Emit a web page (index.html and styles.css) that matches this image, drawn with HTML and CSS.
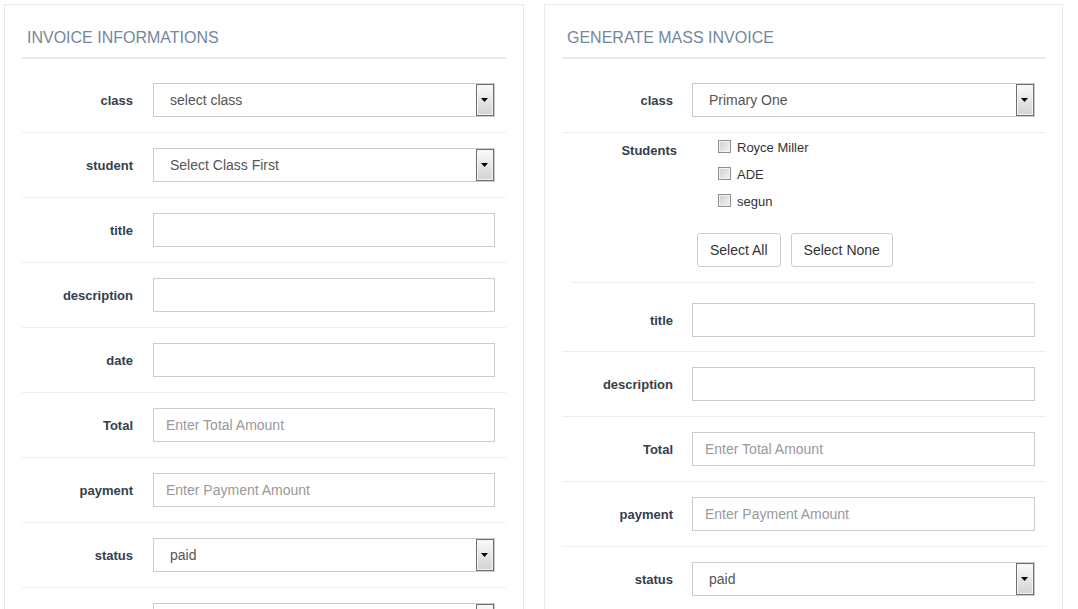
FILE: index.html
```html
<!DOCTYPE html>
<html>
<head>
<meta charset="utf-8">
<title>Invoices</title>
<link rel="stylesheet" href="styles.css">
</head>
<body>
<div class="page">
  <section class="panel">
    <h2 class="panel-title">Invoice Informations</h2>
    <div class="form">
      <div class="row">
        <label class="label">class</label>
        <div class="select"><select class="control"><option>select class</option></select></div>
      </div>
      <div class="row">
        <label class="label">student</label>
        <div class="select"><select class="control"><option>Select Class First</option></select></div>
      </div>
      <div class="row">
        <label class="label">title</label>
        <input class="control" type="text">
      </div>
      <div class="row">
        <label class="label">description</label>
        <input class="control" type="text">
      </div>
      <div class="row">
        <label class="label">date</label>
        <input class="control" type="text">
      </div>
      <div class="row">
        <label class="label">Total</label>
        <input class="control" type="text" placeholder="Enter Total Amount">
      </div>
      <div class="row">
        <label class="label">payment</label>
        <input class="control" type="text" placeholder="Enter Payment Amount">
      </div>
      <div class="row">
        <label class="label">status</label>
        <div class="select"><select class="control"><option>paid</option></select></div>
      </div>
      <div class="row">
        <label class="label"></label>
        <div class="select"><select class="control"><option></option></select></div>
      </div>
    </div>
  </section>

  <section class="panel panel-mass">
    <h2 class="panel-title">Generate Mass Invoice</h2>
    <div class="form">
      <div class="row">
        <label class="label">class</label>
        <div class="select"><select class="control"><option>Primary One</option></select></div>
      </div>
      <div class="row row-students">
        <label class="label label-top">Students</label>
        <div class="students">
          <ul class="checks">
            <li class="check"><span class="box"></span>Royce Miller</li>
            <li class="check"><span class="box"></span>ADE</li>
            <li class="check"><span class="box"></span>segun</li>
          </ul>
          <div class="buttons">
            <button class="btn" type="button">Select All</button>
            <button class="btn" type="button">Select None</button>
          </div>
        </div>
      </div>
      <div class="sep"></div>
      <div class="row row-after-sep">
        <label class="label">title</label>
        <input class="control" type="text">
      </div>
      <div class="row">
        <label class="label">description</label>
        <input class="control" type="text">
      </div>
      <div class="row">
        <label class="label">Total</label>
        <input class="control" type="text" placeholder="Enter Total Amount">
      </div>
      <div class="row">
        <label class="label">payment</label>
        <input class="control" type="text" placeholder="Enter Payment Amount">
      </div>
      <div class="row">
        <label class="label">status</label>
        <div class="select"><select class="control"><option>paid</option></select></div>
      </div>
    </div>
  </section>
</div>
</body>
</html>
```

FILE: styles.css
```css
html, body {
  margin: 0;
  background: #fff;
}
body {
  padding: 4px;
  font-family: "Liberation Sans", Arial, sans-serif;
  color: #333;
}
.page {
  display: grid;
  grid-template-columns: 520px 519px;
  column-gap: 20px;
  align-items: start;
}
.panel {
  border: 1px solid #e6e9ed;
  padding: 22px 17px 0 17px;
  background: #fff;
}
.panel-mass {
  padding-right: 16px;
}
.panel-title {
  margin: 0;
  padding: 0 0 8px 5px;
  font-size: 16px;
  line-height: 22px;
  font-weight: normal;
  text-transform: uppercase;
  color: #73879c;
  border-bottom: 2px solid #e6e9ed;
}
.form {
  padding-top: 9px;
}
.row {
  display: grid;
  grid-template-columns: 111px 1fr;
  column-gap: 20px;
  align-items: center;
  padding: 15px 11px 15px 0;
  border-bottom: 1px solid #eee;
}
.panel-mass .row {
  column-gap: 19px;
}
.label {
  text-align: right;
  font-size: 13px;
  font-weight: bold;
  color: #34404c;
}
.control {
  display: block;
  box-sizing: border-box;
  width: 100%;
  height: 34px;
  margin: 0;
  padding: 0 12px;
  border: 1px solid #ccc;
  border-radius: 0;
  background: #fff;
  font-family: "Liberation Sans", Arial, sans-serif;
  font-size: 14px;
  color: #555;
  outline: none;
}
.control::placeholder {
  color: #999;
}
select.control {
  -webkit-appearance: none;
  appearance: none;
  padding-left: 16px;
}
.select {
  position: relative;
}
.select::after {
  content: "";
  position: absolute;
  right: 1px;
  top: 1px;
  bottom: 1px;
  width: 18px;
  box-sizing: border-box;
  border: 1px solid #6f6f6f;
  box-shadow: inset 0 0 0 1px #f4f4f4;
  background: linear-gradient(#fbfbfb, #e6e6e6 50%, #d2d2d2);
  pointer-events: none;
}
.select::before {
  content: "";
  position: absolute;
  right: 7px;
  top: 50%;
  width: 7px;
  height: 4px;
  margin-top: -2px;
  background: #000;
  clip-path: polygon(0 0, 100% 0, 50% 100%);
  z-index: 1;
  pointer-events: none;
}
.row-students {
  align-items: start;
  padding-top: 4px;
  padding-bottom: 15px;
  border-bottom: none;
}
.label-top {
  padding-top: 4px;
  line-height: 20px;
  margin-right: -4px;
}
.checks {
  list-style: none;
  margin: 0;
  padding: 0 0 0 26px;
  display: flex;
  flex-direction: column;
  gap: 7px;
}
.check {
  display: flex;
  align-items: center;
  height: 20px;
  font-size: 13px;
  color: #333;
}
.box {
  display: inline-block;
  box-sizing: border-box;
  width: 13px;
  height: 13px;
  margin-right: 6px;
  border: 1px solid #8f8f8f;
  box-shadow: inset 0 0 0 1px #f2f2f2;
  background: linear-gradient(135deg, #cfcfcf, #f3f3f3);
  position: relative;
  top: -1px;
}
.buttons {
  display: flex;
  gap: 10px;
  margin-top: 22px;
  padding-left: 5px;
}
.btn {
  height: 34px;
  padding: 0 12px;
  border: 1px solid #ccc;
  border-radius: 3px;
  background: #fff;
  font-family: "Liberation Sans", Arial, sans-serif;
  font-size: 14px;
  color: #333;
}
.sep {
  margin: 0 11px 0 10px;
  border-top: 1px solid #eee;
}
.row-after-sep {
  padding-top: 20px;
  padding-bottom: 14px;
}
```
